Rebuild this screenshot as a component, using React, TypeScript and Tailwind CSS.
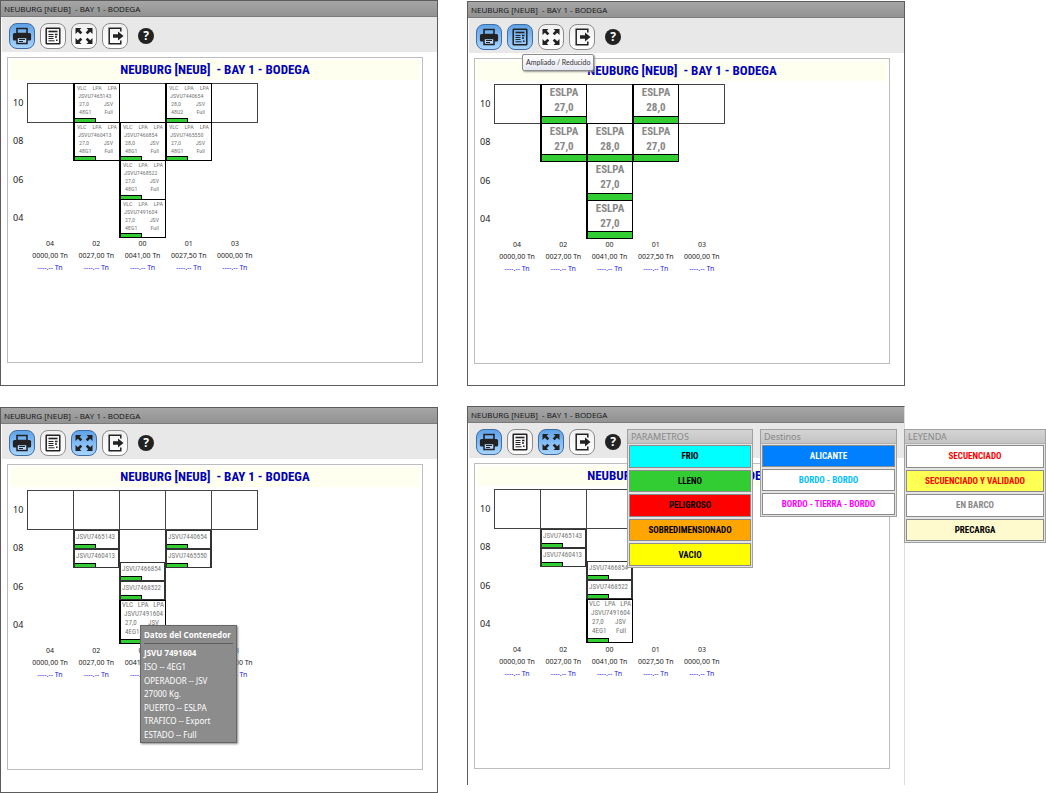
import React from "react";

type View = "detail" | "summary" | "stack";

interface Box {
  id: string;
  weight: string;
  iso: string;
  place: string;
}

const boxes: Box[] = [
  { id: "JSVU7465143", weight: "27,0", iso: "48G1", place: "col-start-2 row-start-1" },
  { id: "JSVU7440654", weight: "28,0", iso: "48U2", place: "col-start-4 row-start-1" },
  { id: "JSVU7460413", weight: "27,0", iso: "48G1", place: "col-start-2 row-start-2" },
  { id: "JSVU7466854", weight: "28,0", iso: "48G1", place: "col-start-3 row-start-2" },
  { id: "JSVU7465550", weight: "27,0", iso: "48G1", place: "col-start-4 row-start-2" },
  { id: "JSVU7468522", weight: "27,0", iso: "48G1", place: "col-start-3 row-start-3" },
  { id: "JSVU7491604", weight: "27,0", iso: "4EG1", place: "col-start-3 row-start-4" },
];

const slots = ["col-start-1", "col-start-2", "col-start-3", "col-start-4", "col-start-5"];
const tiers = ["10", "08", "06", "04"];
const columns = [
  { name: "04", load: "0000,00 Tn" },
  { name: "02", load: "0027,00 Tn" },
  { name: "00", load: "0041,00 Tn" },
  { name: "01", load: "0027,50 Tn" },
  { name: "03", load: "0000,00 Tn" },
];

const narrow = "font-['Liberation_Sans_Narrow','Roboto_Condensed','Liberation_Sans',sans-serif]";

function PrinterIcon() {
  return (
    <svg viewBox="0 0 20 20" className="size-[20px]" aria-hidden="true">
      <path d="M5 2.5h10v5H5z" fill="none" stroke="#222" strokeWidth="1.6" />
      <path d="M2.500 7h15a1.600 1.600 0 0 1 1.600 1.600v4.600a1.400 1.400 0 0 1-1.400 1.300H2.300a1.400 1.400 0 0 1-1.400-1.300V8.600A1.600 1.600 0 0 1 2.500 7z" fill="#222" />
      <path d="M5 11.500h10v6H5z" fill="#b5d8fb" stroke="#222" strokeWidth="1.5" />
      <path d="M7 13.500h6M7 15.500h4" stroke="#222" strokeWidth="1" />
    </svg>
  );
}

function ReportIcon() {
  return (
    <svg viewBox="0 0 20 20" className="size-[20px]" aria-hidden="true" fill="none" stroke="#222">
      <rect x="3.2" y="2.2" width="13.6" height="15.6" rx=".6" strokeWidth="1.5" />
      <path d="M5.5 5.5h9" strokeWidth="1.6" />
      <path d="M5.5 8.5h5M5.5 10.5h5M5.5 12.5h5M5.5 14.8h6" strokeWidth="1" />
      <path d="M12 8.5h2.500M12 11h2M13 14.3h1.5" strokeWidth="1.5" />
    </svg>
  );
}

function ExpandIcon() {
  return (
    <svg viewBox="0 0 20 20" className="size-[20px]" aria-hidden="true">
      <path
        fill="#222"
        d="M1.500 2h6L5.700 3.800l2.600 2.600-1.900 1.900-2.600-2.600L1.500 8zM18.500 2v6l-2.300-2.300-2.600 2.600-1.900-1.900 2.600-2.600L12.500 2zM1.500 18v-6l2.300 2.300 2.600-2.600 1.900 1.900-2.600 2.600L7.500 18zM18.500 18h-6l1.800-1.800-2.600-2.600 1.900-1.900 2.600 2.600 2.300-2.300z"
      />
    </svg>
  );
}

function ExitIcon() {
  return (
    <svg viewBox="0 0 20 20" className="size-[20px]" aria-hidden="true">
      <path d="M15.800 5.500V2.200H4.200v15.600h11.600v-3.300" fill="none" stroke="#222" strokeWidth="1.5" />
      <path d="M8 8.200h5V5.500l5.500 4.500-5.500 4.500v-2.700H8z" fill="#222" />
    </svg>
  );
}

function ToolButton({ label, on, children }: { label: string; on: boolean; children: React.ReactNode }) {
  return (
    <button
      type="button"
      aria-label={label}
      aria-pressed={on}
      className={
        "flex size-[26px] items-center justify-center rounded-[8px] border " +
        (on
          ? "border-[#3d6da3] bg-linear-to-b from-[#5fa2e8] to-[#a6d4ff]"
          : "border-[#8c8c8c] bg-linear-to-b from-[#f0f0f0] to-white")
      }
    >
      {children}
    </button>
  );
}

function DetailBox({ box, large }: { box: Box; large?: boolean }) {
  return (
    <div
      className={
        "relative flex flex-col border border-l-2 border-black bg-white text-[#777] " +
        narrow +
        (large ? " h-[44px] text-[7px] leading-[9px]" : " h-full text-[6px] leading-[8px]")
      }
    >
      <div className={"flex justify-between " + (large ? "px-px" : "px-[2px]")}>
        <span>VLC</span>
        <span>LPA</span>
        <span>LPA</span>
      </div>
      <div className="px-[3px]">{box.id}</div>
      <div className="flex justify-between pr-[6px] pl-1">
        <span>{box.weight}</span>
        <span>JSV</span>
      </div>
      <div className="flex justify-between pr-[6px] pl-1">
        <span>{box.iso}</span>
        <span>Full</span>
      </div>
      <div className="absolute bottom-0 left-0 h-[4px] w-[21px] border-t border-r border-black bg-[#32cd32]" />
    </div>
  );
}

function SummaryBox({ box }: { box: Box }) {
  return (
    <div className={"flex h-full flex-col border border-l-2 border-black bg-white text-center font-bold text-[#888] " + narrow}>
      <div className="flex-1 text-[11px] leading-[15px]">
        <div>ESLPA</div>
        <div>{box.weight}</div>
      </div>
      <div className="h-[7px] border-t border-black bg-[#32cd32]" />
    </div>
  );
}

function ShortBox({ id }: { id: string }) {
  return (
    <div className={"flex h-[19px] flex-col justify-between border-x-2 border-t border-b border-[#333] bg-white text-[7px] leading-[13px] text-[#777] " + narrow}>
      <div className="px-px">{id}</div>
      <div className="h-[4px] w-[21px] border-t border-r border-black bg-[#32cd32]" />
    </div>
  );
}

function BayGrid({ view }: { view: View }) {
  return (
    <div className="grid h-[154px] w-[230px] grid-cols-5 grid-rows-4">
      {slots.map((slot) => (
        <div key={slot} className={"row-start-1 -mr-px -mb-px border border-[#444] " + slot} />
      ))}
      {view !== "stack" &&
        boxes.map((box) => (
          <div key={box.id} className={"-mr-px -mb-px " + box.place}>
            {view === "detail" ? <DetailBox box={box} /> : <SummaryBox box={box} />}
          </div>
        ))}
      {view === "stack" && (
        <>
          <div className="col-start-2 row-start-2 -mr-px pt-px">
            <ShortBox id="JSVU7465143" />
            <ShortBox id="JSVU7460413" />
          </div>
          <div className="col-start-4 row-start-2 -mr-px pt-px">
            <ShortBox id="JSVU7440654" />
            <ShortBox id="JSVU7465550" />
          </div>
          <div className="col-start-3 row-span-3 row-start-2 -mr-px self-end">
            <ShortBox id="JSVU7466854" />
            <ShortBox id="JSVU7468522" />
            <DetailBox box={boxes[6]} large />
          </div>
        </>
      )}
    </div>
  );
}

interface BayWindowProps {
  view: View;
  className: string;
  children?: React.ReactNode;
}

function BayWindow({ view, className, children }: BayWindowProps) {
  return (
    <section className={"relative flex min-w-0 flex-col border-t border-l border-[#5c5c5c] bg-white " + className}>
      <header className="h-[16px] border-b border-[#7c7c7c] bg-linear-to-b from-[#a6a6a6] to-[#929292] pl-[3px] font-['Open_Sans','Noto_Sans',sans-serif] text-[8px] leading-[15px] font-medium whitespace-pre text-[#111]">
        NEUBURG [NEUB]  - BAY 1 - BODEGA
      </header>
      <div className="ml-px flex h-[35px] shrink-0 items-center gap-[5px] bg-[#e8e8e8] pt-[3px] pl-[7px]">
        <ToolButton label="Imprimir" on>
          <PrinterIcon />
        </ToolButton>
        <ToolButton label="Ampliado / Reducido" on={view === "summary"}>
          <ReportIcon />
        </ToolButton>
        <ToolButton label="Expandir" on={view === "stack"}>
          <ExpandIcon />
        </ToolButton>
        <ToolButton label="Salir" on={false}>
          <ExitIcon />
        </ToolButton>
        <button
          type="button"
          className="ml-[5px] flex size-[16px] items-center justify-center rounded-full bg-[#222] text-[12px] leading-[16px] font-bold text-white"
        >
          ?
        </button>
      </div>
      <div className="mt-[5px] mr-[14px] ml-[6px] h-[306px] border border-[#bdbdbd] p-[2px]">
        <h2 className={"h-[20px] bg-[#fffff0] text-center text-[13px] leading-[20px] font-bold whitespace-pre text-[#0000b8] " + narrow}>
          NEUBURG [NEUB]  - BAY 1 - BODEGA
        </h2>
        <div className="mt-[3px] flex">
          <div className="grid h-[154px] w-[17px] grid-rows-4 items-center pl-[3px] text-[9px] text-[#222]">
            {tiers.map((tier) => (
              <span key={tier}>{tier}</span>
            ))}
          </div>
          <BayGrid view={view} />
        </div>
        <div className="mt-px ml-[17px] grid w-[231px] grid-cols-5 text-center text-[7px] leading-[12px] whitespace-nowrap text-[#222]">
          {columns.map((column) => (
            <div key={column.name}>
              <div>{column.name}</div>
              <div>{column.load}</div>
              <div className="text-[#2222ee]">----.-- Tn</div>
            </div>
          ))}
        </div>
      </div>
      {children}
    </section>
  );
}

interface PaletteProps {
  title: string;
  size: string;
  body: string;
  items: { label: string; tone: string }[];
}

function Palette({ title, size, body, items }: PaletteProps) {
  return (
    <div className={"border border-[#a0a0a0] bg-[#e4e4e4] " + size}>
      <h3 className="h-[14px] border-b border-[#b0b0b0] bg-linear-to-b from-[#d4d4d4] to-[#c4c4c4] pl-[3px] text-[9px] leading-[13px] text-[#888]">
        {title}
      </h3>
      <ul className={"m-px flex flex-col gap-[2px] " + body}>
        {items.map((item) => (
          <li
            key={item.label}
            className={"flex flex-1 items-center justify-center border border-[#8c8c8c] text-[9px] leading-[12px] font-bold " + narrow + " " + item.tone}
          >
            {item.label}
          </li>
        ))}
      </ul>
    </div>
  );
}

function ContainerTip() {
  const lines = ["ISO -- 4EG1", "OPERADOR -- JSV", "27000 Kg.", "PUERTO -- ESLPA", "TRAFICO -- Export", "ESTADO -- Full"];
  return (
    <div className="absolute top-[217px] left-[139px] w-[97px] border border-[#666] bg-[#8c8c8c] px-[3px] pb-px text-[8px] whitespace-nowrap text-white shadow-[1px_1px_2px_#888]">
      <div className="border-b border-[#5c5c5c] leading-[17px] font-bold">Datos del Contenedor</div>
      <div className="pt-px leading-[15px] font-bold">JSVU 7491604</div>
      <div className="flex h-[81px] flex-col justify-between leading-[13px]">
        {lines.map((line) => (
          <div key={line}>{line}</div>
        ))}
      </div>
    </div>
  );
}

export default function App() {
  return (
    <main className="grid min-h-screen grid-cols-2 content-start gap-x-[29px] gap-y-[20px] bg-white pr-[141px] font-['Noto_Sans','Open_Sans',sans-serif]">
      <BayWindow view="detail" className="border-r border-b pb-[22px]" />
      <BayWindow view="summary" className="mt-px border-r border-b">
        <div
          role="tooltip"
          className="absolute top-[52px] left-[54px] rounded-[2px] border border-[#8c8c8c] bg-linear-to-b from-white to-[#e6e8f2] px-[3px] font-['Lato','Noto_Sans',sans-serif] text-[7px] leading-[15px] whitespace-nowrap text-[#333] shadow-[1px_1px_2px_#999]"
        >
          Ampliado / Reducido
        </div>
      </BayWindow>
      <BayWindow view="stack" className="mt-px border-r border-b pb-[22px]">
        <ContainerTip />
      </BayWindow>
      <BayWindow view="stack" className="mb-[8px] border-r border-r-[#dddddd]">
        <div className="absolute top-[22px] left-[159px] flex items-start gap-[7px]">
          <Palette
            title="PARAMETROS"
            size="w-[126px]"
            body="h-[121px]"
            items={[
              { label: "FRIO", tone: "bg-[#00ffff] text-black" },
              { label: "LLENO", tone: "bg-[#32cd32] text-black" },
              { label: "PELIGROSO", tone: "bg-[#ff0000] text-black" },
              { label: "SOBREDIMENSIONADO", tone: "bg-[#ffa500] text-black" },
              { label: "VACIO", tone: "bg-[#ffff00] text-black" },
            ]}
          />
          <Palette
            title="Destinos"
            size="w-[137px]"
            body="h-[70px]"
            items={[
              { label: "ALICANTE", tone: "bg-[#0080ff] text-white" },
              { label: "BORDO - BORDO", tone: "bg-white text-[#00bfff]" },
              { label: "BORDO - TIERRA - BORDO", tone: "bg-white text-[#ff00ff]" },
            ]}
          />
          <Palette
            title="LEYENDA"
            size="w-[142px]"
            body="h-[96px]"
            items={[
              { label: "SECUENCIADO", tone: "bg-white text-[#ff0000]" },
              { label: "SECUENCIADO Y VALIDADO", tone: "bg-[#ffff54] text-[#ff0000]" },
              { label: "EN BARCO", tone: "bg-white text-[#888]" },
              { label: "PRECARGA", tone: "bg-[#fffacd] text-black" },
            ]}
          />
        </div>
      </BayWindow>
    </main>
  );
}
